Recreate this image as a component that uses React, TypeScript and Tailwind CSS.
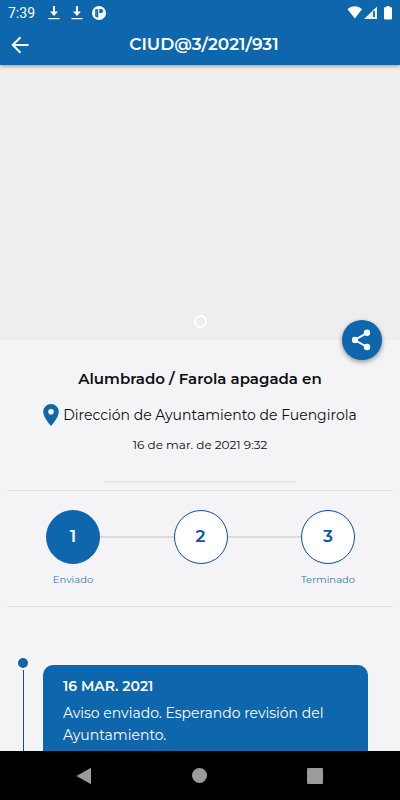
import { Fragment } from "react";

const steps = [
  { number: 1, label: "Enviado", active: true },
  { number: 2, label: "", active: false },
  { number: 3, label: "Terminado", active: false },
];

const updates = [
  { date: "16 MAR. 2021", text: "Aviso enviado. Esperando revisión del Ayuntamiento." },
];

function DownloadIcon() {
  return (
    <svg viewBox="0 0 12 14" className="w-3 h-3.5" fill="currentColor" aria-hidden="true">
      <path d="M5 0h2v5.500h3L6 10 2 5.500h3zM.5 12h11v1.200H.5z" />
    </svg>
  );
}

function StatusBar() {
  return (
    <div className="flex items-center h-[25px] px-2 text-white">
      <span className="w-10 font-[Roboto,sans-serif] text-sm">7:39</span>
      <div className="flex items-center gap-[11px]">
        <DownloadIcon />
        <DownloadIcon />
        <svg viewBox="0 0 14 14" className="w-3.5 h-3.5 -ml-0.5" aria-hidden="true">
          <circle cx="7" cy="7" r="7" fill="#fff" />
          <path d="M3.200 3.200h3v8.600L3.200 10.500z" fill="#0e66ac" />
          <path d="M7.300 3h1.700a2 2 0 1 1 0 4H7.300z" fill="#0e66ac" />
          <path d="M4.200 4.200h.9v5.500h-.9z" fill="#3f86c0" />
        </svg>
      </div>
      <svg viewBox="0 0 45 14" className="ml-auto w-[45px] h-3.5" fill="#fff" aria-hidden="true">
        <path d="M.5 3.200C4.500-.8 11-.8 15 3.200L7.800 12.500z" />
        <path d="M30 .5V13H17z" fillOpacity="0.9" />
        <path d="M26.200 5h1.600v6h-1.600z" fill="#0d4aa5" />
        <path d="M39.500 0h3v1.200h1.700q.8 0 .8.8v10.600q0 .8-.8.800h-6.400q-.8 0-.8-.8V2q0-.8.8-.8h1.700z" />
      </svg>
    </div>
  );
}

function StepTracker() {
  return (
    <section className="mx-[7px] border-y border-[#e0e0e2] pt-[19px] pb-[18px] pl-[39px] pr-[38px]">
      <div className="flex items-start">
        {steps.map((step, i) => (
          <Fragment key={step.number}>
            {i > 0 && <div className="flex-1 h-0.5 mt-[26px] bg-[#dcdcde]" />}
            <div className="flex flex-col items-center w-[54px]">
              <div
                className={`w-[54px] h-[54px] rounded-full border flex items-center justify-center text-[17px] font-semibold ${
                  step.active ? "border-[#0e66ac] bg-[#0e66ac] text-white" : "border-[#0d4aa5] bg-white text-[#0e56a5]"
                }`}
              >
                {step.number}
              </div>
              <p className="mt-2 h-4 text-[10px] leading-4 text-[#3f75b0] whitespace-nowrap">{step.label}</p>
            </div>
          </Fragment>
        ))}
      </div>
    </section>
  );
}

export default function App() {
  return (
    <div className="flex flex-col h-dvh overflow-hidden bg-[#f4f4f6] font-[Montserrat,Inter,sans-serif] text-[#0b0d10]">
      <header className="relative z-10 shrink-0 bg-[#0e66ac] text-white shadow-[0_1px_4px_rgba(0,0,0,0.4)]">
        <StatusBar />
        <div className="grid grid-cols-[40px_1fr_32px] items-center h-10">
          <button type="button" aria-label="Volver" className="flex items-center justify-center h-10">
            <svg viewBox="0 0 18 18" className="w-[18px] h-[18px]" fill="none" stroke="currentColor" strokeWidth="2" aria-hidden="true">
              <path d="M17.500 9H2M9.500 1.200L1.700 9l7.800 7.800" />
            </svg>
          </button>
          <h1 className="text-center text-[17px] font-semibold">CIUD@3/2021/931</h1>
        </div>
      </header>

      <main className="flex-1 min-h-0 overflow-hidden">
        {/* Photo carousel */}
        <div className="relative flex items-end justify-center h-[275px] pb-3 bg-[#eeeeee]">
          <span className="w-[13px] h-[13px] rounded-full border-2 border-white" />
          <button
            type="button"
            aria-label="Compartir"
            className="absolute right-[18px] -bottom-5 flex items-center justify-center w-10 h-10 rounded-full bg-[#0e66ac] shadow-[0_2px_5px_rgba(0,0,0,0.4)]"
          >
            <svg viewBox="0 0 20 22" className="w-5 h-[22px]" fill="#fff" stroke="#fff" strokeWidth="2" aria-hidden="true">
              <path d="M15 3.800L2.800 11 15 18" fill="none" />
              <circle cx="15" cy="3.800" r="2.200" />
              <circle cx="2.800" cy="11" r="2.200" />
              <circle cx="15" cy="18" r="2.200" />
            </svg>
          </button>
        </div>

        {/* Report details */}
        <section className="flex flex-col items-center pt-[27px]">
          <h2 className="text-[15px] leading-6 font-semibold">Alumbrado / Farola apagada en</h2>
          <div className="flex items-center gap-1 mt-3">
            <svg viewBox="0 0 16 22" className="w-4 h-[22px]" aria-hidden="true">
              <path fillRule="evenodd" fill="#0e66ac" d="M8 0a7.800 7.800 0 0 0-7.800 7.800C.2 13.500 8 22 8 22s7.800-8.500 7.800-14.200A7.800 7.800 0 0 0 8 0zm0 5a2.800 2.800 0 1 1 0 5.600A2.800 2.800 0 0 1 8 5z" />
            </svg>
            <p className="text-sm leading-6 whitespace-nowrap">Dirección de Ayuntamiento de Fuengirola</p>
          </div>
          <p className="mt-2 text-xs leading-5">16 de mar. de 2021 9:32</p>
          <hr className="w-48 mt-[26px] mb-[7px] border-t-2 border-[#e8e8ea]" />
        </section>

        <StepTracker />

        {/* Timeline */}
        <ol className="pt-[49px]">
          {updates.map((update) => (
            <li key={update.date} className="flex pl-4 pr-8">
              <div className="flex flex-col items-center w-3.5 mr-[13px]">
                <span className="w-3.5 h-3.5 rounded-full border-2 border-white bg-[#0e66ac]" />
                <span className="w-px flex-1 bg-[#1f4a96]" />
              </div>
              <div className="flex-1 mt-[9px] px-5 pt-[11px] pb-6 rounded-[10px] bg-[#0e66ac] text-white">
                <h3 className="text-sm leading-5 font-semibold">{update.date}</h3>
                <p className="mt-1.5 text-sm leading-[22px]">{update.text}</p>
              </div>
            </li>
          ))}
        </ol>
      </main>

      <nav className="shrink-0 flex items-center justify-center gap-[100px] h-[49px] pr-0.5 bg-black text-[#9b9b9b]">
        <button type="button" aria-label="Atrás">
          <svg viewBox="0 0 16 18" className="w-4 h-[18px]" fill="currentColor" aria-hidden="true">
            <path d="M15 .8v16.400L.5 9z" />
          </svg>
        </button>
        <button type="button" aria-label="Inicio">
          <span className="block w-[15px] h-[15px] rounded-full bg-current" />
        </button>
        <button type="button" aria-label="Recientes">
          <span className="block w-4 h-4 rounded-[1px] bg-current" />
        </button>
      </nav>
    </div>
  );
}
